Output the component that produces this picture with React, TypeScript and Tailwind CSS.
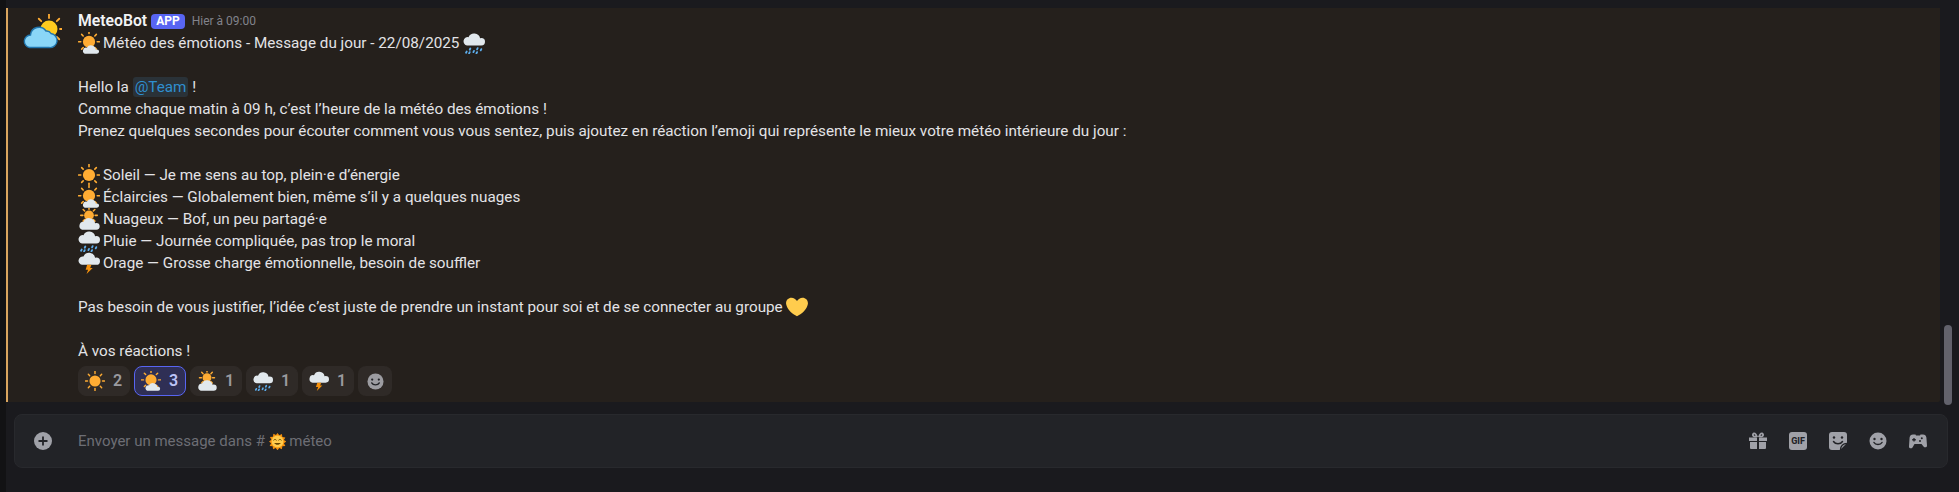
import type { ReactNode } from 'react';

const SUN_RAYS = [0, 45, 90, 135, 180, 225, 270, 315];

function Rays({ cx, cy, from, to, width = 2.6 }: { cx: number; cy: number; from: number; to: number; width?: number }) {
  return (
    <g stroke="#FFAC33" strokeWidth={width} strokeLinecap="round">
      {SUN_RAYS.map((a) => {
        const r = (a * Math.PI) / 180;
        return (
          <line
            key={a}
            x1={cx + Math.cos(r) * from}
            y1={cy + Math.sin(r) * from}
            x2={cx + Math.cos(r) * to}
            y2={cy + Math.sin(r) * to}
          />
        );
      })}
    </g>
  );
}

function Svg({ size, children }: { size: number; children: ReactNode }) {
  return (
    <svg width={size} height={size} viewBox="0 0 36 36" className="shrink-0">
      {children}
    </svg>
  );
}

function SunEmoji({ size = 22 }: { size?: number }) {
  return (
    <Svg size={size}>
      <Rays cx={18} cy={18} from={13.5} to={17} />
      <circle cx={18} cy={18} r={10} fill="#FFAC33" />
    </Svg>
  );
}

function SmallCloudEmoji({ size = 22 }: { size?: number }) {
  return (
    <Svg size={size}>
      <Rays cx={18} cy={16} from={13.5} to={17} />
      <circle cx={18} cy={16} r={10} fill="#FFAC33" />
      <path
        d="M31 28.500a5 5 0 0 0-1.800.3A8 8 0 0 0 14.500 25.600 5.300 5.300 0 0 0 11 35.500H31a3.500 3.500 0 0 0 0-7z"
        fill="#E1E8ED"
      />
    </Svg>
  );
}

function CloudSunEmoji({ size = 22 }: { size?: number }) {
  return (
    <Svg size={size}>
      <Rays cx={18} cy={12} from={10} to={13.5} />
      <circle cx={18} cy={12} r={8} fill="#FFAC33" />
      <path d="M30 24.500a6.500 6.500 0 0 0-2 .3A10 10 0 0 0 9 22.500 6.700 6.700 0 0 0 6.700 35.500H30a5.500 5.500 0 0 0 0-11z" fill="#E1E8ED" />
    </Svg>
  );
}

function RainEmoji({ size = 22 }: { size?: number }) {
  return (
    <Svg size={size}>
      <path d="M30 10a6.500 6.500 0 0 0-2 .3A10 10 0 0 0 9 8.500 6.500 6.500 0 0 0 6.500 22H30a5.500 5.500 0 0 0 0-12z" fill="#E1E8ED" />
      <g stroke="#5DADEC" strokeWidth={3} strokeLinecap="round">
        <line x1={6} y1={32} x2={5} y2={34} />
        <line x1={12} y1={27} x2={11} y2={29} />
        <line x1={11} y1={33} x2={10} y2={35} />
        <line x1={18} y1={31} x2={17} y2={33} />
        <line x1={24} y1={26.500} x2={23} y2={28.500} />
        <line x1={23} y1={33} x2={22} y2={35} />
        <line x1={30} y1={28} x2={29} y2={30} />
      </g>
    </Svg>
  );
}

function StormEmoji({ size = 22 }: { size?: number }) {
  return (
    <Svg size={size}>
      <path d="M30 9a6.500 6.500 0 0 0-2 .3A10 10 0 0 0 9 7.500 6.500 6.500 0 0 0 6.500 21H30a5.500 5.500 0 0 0 0-12z" fill="#E1E8ED" />
      <path d="M15 21h7l-2 5h4L14 36l2.500-7H12.500z" fill="#F4900C" />
    </Svg>
  );
}

function SunFaceEmoji() {
  return (
    <svg width={17} height={17} viewBox="0 0 36 36" className="shrink-0">
      <path d="M18 0l3.800 5 5.500-3 1 6.300 6.300 1-3 5.500 5 3.200-5 3.800 3 5.500-6.300 1-1 6.300-5.500-3-3.800 5-3.800-5-5.500 3-1-6.300-6.300-1 3-5.500L0 18l5-3.800-3-5.500 6.300-1 1-6.300 5.500 3z" fill="#F4900C" />
      <circle cx={18} cy={18} r={12.500} fill="#FFCC4D" />
      <path d="M10 15c1.500-2 4-2 5.500 0M20.500 15c1.500-2 4-2 5.500 0" stroke="#664500" strokeWidth={2} fill="none" strokeLinecap="round" />
      <path d="M11 21c3 5 11 5 14 0z" fill="#664500" />
    </svg>
  );
}

function Avatar() {
  return (
    <svg width={40} height={40} viewBox="0 0 40 40" className="shrink-0">
      <Rays cx={27} cy={15} from={11} to={14.500} width={1.800} />
      <circle cx={27} cy={15} r={8.500} fill="#FFCB1F" />
      <path
        d="M29 19.500a5 5 0 0 0-5-2.500 8.500 8.500 0 0 0-15.500 4A6.300 6.300 0 0 0 7.500 33.500H27a6.500 6.500 0 0 0 2-14z"
        fill="#8AD6F7"
        stroke="#2176AE"
        strokeWidth={1.400}
      />
    </svg>
  );
}

function Smile({ size = 18, fill = '#a0a1a8' }: { size?: number; fill?: string }) {
  return (
    <svg width={size} height={size} viewBox="0 0 18 18" className="shrink-0">
      <circle cx={9} cy={9} r={8.500} fill={fill} />
      <circle cx={5.500} cy={7} r={1.200} fill="#222327" />
      <circle cx={12.500} cy={7} r={1.200} fill="#222327" />
      <path d="M5 10.500c1.500 2.800 6.500 2.800 8 0" stroke="#222327" strokeWidth={1.500} fill="none" strokeLinecap="round" />
    </svg>
  );
}

function Line({ emoji, children }: { emoji?: ReactNode; children?: ReactNode }) {
  return (
    <div className="flex h-[22px] items-center whitespace-pre">
      {emoji && <span className="mr-[3px] flex">{emoji}</span>}
      <span>{children}</span>
    </div>
  );
}

const reactions = [
  { icon: <SunEmoji size={20} />, count: 2 },
  { icon: <SmallCloudEmoji size={20} />, count: 3, me: true },
  { icon: <CloudSunEmoji size={20} />, count: 1 },
  { icon: <RainEmoji size={20} />, count: 1 },
  { icon: <StormEmoji size={20} />, count: 1 },
];

export default function App() {
  return (
    <div className="flex h-[492px] w-[1959px] overflow-hidden bg-[#121214] font-['Roboto',sans-serif] text-[15.250px] text-[#e3e3e6]">
      <div className="w-[6px] shrink-0" />
      <div className="flex min-w-0 flex-1 flex-col bg-[#1a1a1e] pt-[8px]">
        <div className="flex h-[397px] items-start">
          {/* Message */}
          <div className="flex h-[394px] w-[1934px] rounded-br-[2px] border-l-2 border-[#d9a55f] bg-[#25201c]">
            <div className="w-[70px] shrink-0 pl-[14px] pt-[6px]">
              <Avatar />
            </div>
            <div className="pt-[2px]">
              <div className="flex h-[22px] items-center">
                <span className="text-[15.750px] font-semibold text-[#f2f3f5]">MeteoBot</span>
                <span className="ml-[4px] rounded-[4px] bg-[#5865f2] px-[5px] text-[12px] font-bold leading-[15px] text-white">APP</span>
                <span className="ml-[7px] text-[12px] text-[#82838b]">Hier à 09:00</span>
              </div>
              <Line emoji={<SmallCloudEmoji />}>
                Météo des émotions - Message du jour - 22/08/2025
                <span className="ml-[4px] inline-block align-[-6px]"><RainEmoji /></span>
              </Line>
              <Line />
              <Line>
                Hello la <span className="rounded-[3px] bg-[#2a3238] px-[2px] py-[1px] text-[#2f8fd0]">@Team</span> !
              </Line>
              <Line>Comme chaque matin à 09 h, c’est l’heure de la météo des émotions !</Line>
              <Line>Prenez quelques secondes pour écouter comment vous vous sentez, puis ajoutez en réaction l’emoji qui représente le mieux votre météo intérieure du jour :</Line>
              <Line />
              <Line emoji={<SunEmoji />}>Soleil — Je me sens au top, plein·e d’énergie</Line>
              <Line emoji={<SmallCloudEmoji />}>Éclaircies — Globalement bien, même s’il y a quelques nuages</Line>
              <Line emoji={<CloudSunEmoji />}>Nuageux — Bof, un peu partagé·e</Line>
              <Line emoji={<RainEmoji />}>Pluie — Journée compliquée, pas trop le moral</Line>
              <Line emoji={<StormEmoji />}>Orage — Grosse charge émotionnelle, besoin de souffler</Line>
              <Line />
              <Line>
                Pas besoin de vous justifier, l’idée c’est juste de prendre un instant pour soi et de se connecter au groupe
                <svg width={22} height={22} viewBox="0 0 36 36" className="ml-[3px] inline-block align-[-6px]">
                  <path d="M35.900 11.700C35.900 6.900 32 3 27.100 3c-3.800 0-7 2.400-9.100 5.200C15.900 5.400 12.700 3 8.900 3 4 3 .1 6.900.1 11.700c0 .7.100 1.300.2 1.900C1.600 21.700 10.800 30.300 18 33c7.200-2.700 16.400-11.300 17.700-19.400.1-.6.2-1.200.2-1.900z" fill="#FFCC4D" />
                </svg>
              </Line>
              <Line />
              <Line>À vos réactions !</Line>
              {/* Reactions */}
              <div className="mt-[4px] flex gap-[4px] text-[16px]">
                {reactions.map((r, i) => (
                  <div
                    key={i}
                    className={
                      r.me
                        ? 'flex h-[30px] w-[52px] items-center gap-[8px] rounded-[8px] border border-[#5865f2] bg-[#2f2f55] pl-[6px] font-semibold text-[#bcc3f7]'
                        : 'flex h-[30px] w-[52px] items-center gap-[8px] rounded-[8px] border border-[#2f2a27] bg-[#2f2a27] pl-[6px] font-semibold text-[#9a9a9f]'
                    }
                  >
                    {r.icon}
                    <span>{r.count}</span>
                  </div>
                ))}
                <div className="flex h-[30px] w-[34px] items-center justify-center rounded-[8px] bg-[#2f2a27]">
                  <Smile size={17} fill="#9c9ca1" />
                </div>
              </div>
            </div>
          </div>
          {/* Scrollbar */}
          <div className="flex h-full flex-1 flex-col justify-end pl-[4px]">
            <div className="h-[80px] w-[8px] rounded-[4px] bg-[#62626c]" />
          </div>
        </div>
        {/* Input */}
        <div className="ml-[8px] mt-[9px] flex h-[54px] w-[1934px] items-center rounded-[8px] border border-[#28292d] bg-[#222327] pl-[19px] pr-[20px]">
          <svg width={18} height={18} viewBox="0 0 18 18" className="shrink-0">
            <circle cx={9} cy={9} r={9} fill="#a0a1a8" />
            <path d="M9 4.500v9M4.500 9h9" stroke="#222327" strokeWidth={1.800} />
          </svg>
          <div className="ml-[26px] flex items-center text-[15px] text-[#6d6e75]">
            <span className="whitespace-pre">Envoyer un message dans # </span>
            <SunFaceEmoji />
            <span className="whitespace-pre"> méteo</span>
          </div>
          <div className="ml-auto flex items-center gap-[22px]">
            <svg width={18} height={18} viewBox="0 0 18 18" className="shrink-0" fill="#a0a1a8">
              <path d="M0 5.500h8v3.500H0zM10 5.500h8v3.500h-8zM1 10h7v7H2a1 1 0 0 1-1-1zM10 10h7v6a1 1 0 0 1-1 1h-6z" />
              <path
                fillRule="evenodd"
                d="M9 5C7.500 1 6 .5 5 .5 3.500.5 3 2 3 3c0 1.500 1.500 2.500 3 2.500zM5.300 2.300C4.800 2.300 4.700 3 5 3.500c.3.300.8.300 1.500.2-.2-.6-.6-1.400-1.200-1.400zM9 5c1.500-4 3-4.500 4-4.500 1.500 0 2 1.500 2 2.500 0 1.500-1.500 2.500-3 2.500zM12.700 2.300c.5 0 .6.700.3 1.200-.3.300-.8.300-1.500.2.200-.6.600-1.400 1.200-1.400z"
              />
            </svg>
            <div className="flex h-[18px] w-[18px] items-center justify-center rounded-[3px] bg-[#a0a1a8] text-[9px] font-extrabold leading-none text-[#222327]">GIF</div>
            <svg width={18} height={18} viewBox="0 0 18 18" className="shrink-0">
              <path d="M3 0h12a3 3 0 0 1 3 3v8l-7 7H3a3 3 0 0 1-3-3V3a3 3 0 0 1 3-3z" fill="#a0a1a8" />
              <circle cx={5} cy={5.500} r={1.200} fill="#222327" />
              <circle cx={13} cy={5.500} r={1.200} fill="#222327" />
              <path d="M4.500 9.500c2 3 7 3 9 0" stroke="#222327" strokeWidth={1.500} fill="none" strokeLinecap="round" />
              <path d="M11.500 18c0-4 2.500-6.500 6.500-6.500" stroke="#222327" strokeWidth={1.400} fill="none" />
            </svg>
            <Smile />
            <svg width={18} height={18} viewBox="0 0 18 18" className="shrink-0">
              <path d="M4 2.500h2.500l.5 1h4l.5-1H14c2 0 3 1 3.400 3l.6 8c.1 2-2.400 2.500-3.500 1L12.500 12h-7l-2 3.500C2.400 17 -.1 16.500 0 14.500l.6-9C1 3.500 2 2.500 4 2.500z" fill="#a0a1a8" />
              <path d="M5 6v3.500M3.200 7.750h3.600" stroke="#222327" strokeWidth={1.300} />
              <circle cx={12.800} cy={6.300} r={1} fill="#222327" />
              <circle cx={11} cy={9} r={1} fill="#222327" />
            </svg>
          </div>
        </div>
      </div>
    </div>
  );
}
